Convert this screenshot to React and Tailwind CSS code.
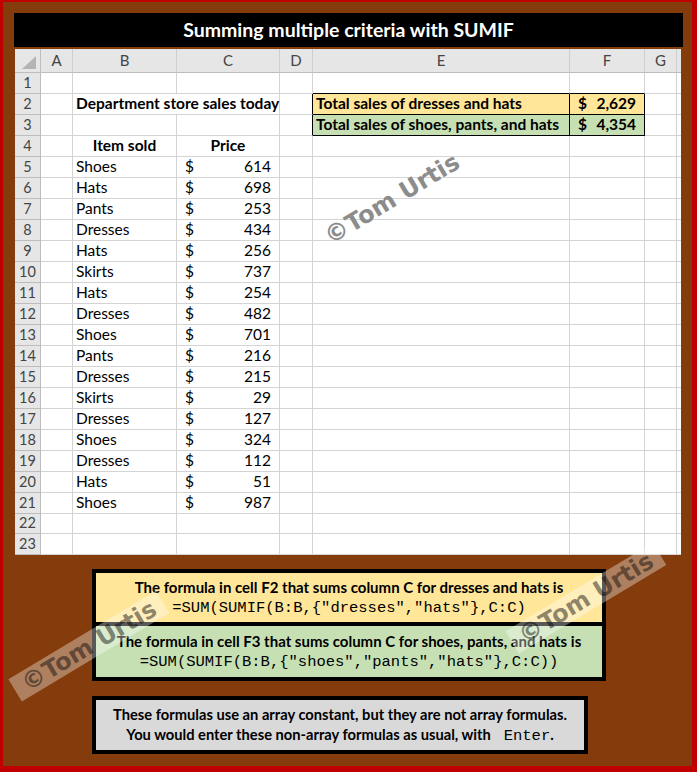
import React from 'react';

const GRID = 'grid grid-cols-[26px_32px_104px_103px_33px_257px_75px_32px_4px]';
const LETTERS = ['A', 'B', 'C', 'D', 'E', 'F', 'G', ''];

const sales = [
  ['Shoes', 614], ['Hats', 698], ['Pants', 253], ['Dresses', 434], ['Hats', 256],
  ['Skirts', 737], ['Hats', 254], ['Dresses', 482], ['Shoes', 701], ['Pants', 216],
  ['Dresses', 215], ['Skirts', 29], ['Dresses', 127], ['Shoes', 324], ['Dresses', 112],
  ['Hats', 51], ['Shoes', 987],
];

const cell = 'border-r border-b border-[#d4d4d4] flex items-center overflow-visible whitespace-nowrap';

const Money = ({ value, bold }) => (
  <div className={`flex w-full justify-between px-2 ${bold ? 'font-bold' : ''}`}>
    <span>$</span>
    <span>{value}</span>
  </div>
);

const SheetRow = ({ n }) => {
  const item = n >= 5 && n <= 21 ? sales[n - 5] : null;
  const height = n === 22 ? 'h-[20px]' : 'h-[21px]';

  // cells A..G plus the sliver past G
  let b = null, c = null, e = null, f = null;
  let bCls = cell, cCls = cell, dCls = cell, eCls = cell, fCls = cell;

  if (n === 1) {
    eCls = `${cell} !border-b-black`;
    fCls = `${cell} !border-b-black`;
  }
  if (n === 2) {
    bCls = 'border-b border-[#d4d4d4] flex items-center overflow-visible whitespace-nowrap relative z-10';
    b = <span className="pl-[3px] font-bold">Department store sales today</span>;
    dCls = `${cell} !border-r-black`;
    eCls = `${cell} !border-r-black !border-b-black bg-[#ffe699]`;
    fCls = `${cell} !border-r-black !border-b-black bg-[#ffe699]`;
    e = <span className="pl-[3px] font-bold">Total sales of dresses and hats</span>;
    f = <Money value="2,629" bold />;
  }
  if (n === 3) {
    dCls = `${cell} !border-r-black`;
    eCls = `${cell} !border-r-black !border-b-black bg-[#c6e0b4]`;
    fCls = `${cell} !border-r-black !border-b-black bg-[#c6e0b4]`;
    e = <span className="pl-[3px] font-bold">Total sales of shoes, pants, and hats</span>;
    f = <Money value="4,354" bold />;
  }
  if (n === 4) {
    bCls = `${cell} justify-center font-bold`;
    cCls = `${cell} justify-center font-bold`;
    b = 'Item sold';
    c = 'Price';
  }
  if (item) {
    b = <span className="pl-[3px]">{item[0]}</span>;
    c = <Money value={item[1]} />;
  }

  return (
    <div className={`${GRID} ${height}`}>
      <div className="bg-[#e6e6e6] border-r border-b border-[#bdbdbd] flex items-center justify-center text-[14.5px] text-[#444]">
        {n}
      </div>
      <div className={cell} />
      <div className={bCls}>{b}</div>
      <div className={cCls}>{c}</div>
      <div className={dCls} />
      <div className={eCls}>{e}</div>
      <div className={fCls}>{f}</div>
      <div className={cell} />
      <div className="border-b border-[#d4d4d4]" />
    </div>
  );
};

const Sheet = () => (
  <div className="ml-[1px] mt-[2px] w-[666px] bg-white text-[15.5px] text-black leading-none">
    <div className={`${GRID} h-[24px] bg-[#e6e6e6]`}>
      <div className="relative border-r border-b border-[#bdbdbd]">
        <svg className="absolute right-[4px] bottom-[3px]" width="14" height="13" viewBox="0 0 14 13">
          <polygon points="14,0 14,13 0,13" fill="#b4b4b4" />
        </svg>
      </div>
      {LETTERS.map((l, i) => (
        <div
          key={i}
          className={`flex items-center justify-center border-b border-[#bdbdbd] text-[15px] text-[#444] ${i < 7 ? 'border-r border-r-[#cfcfcf]' : ''}`}
        >
          {l}
        </div>
      ))}
    </div>
    {Array.from({ length: 23 }, (_, i) => (
      <SheetRow key={i} n={i + 1} />
    ))}
  </div>
);

const Watermark = ({ className, band }) => (
  <div
    className={`absolute -translate-x-1/2 -translate-y-1/2 rotate-[-31deg] whitespace-nowrap font-['DejaVu_Sans',sans-serif] font-bold text-[24px] leading-[26px] ${className} ${
      band ? 'bg-white/35 text-black/45 px-[10px]' : 'text-[#8c8c8c]'
    }`}
  >
    ©Tom Urtis
  </div>
);

export default function App() {
  return (
    <div className="relative w-[697px] h-[772px] overflow-hidden bg-[#843c0c] border-[#c00000] border-t-2 border-l-[3px] border-r-[5px] border-b-[6px] pt-[11px] pl-[11px] font-['Lato','Carlito',sans-serif]">
      <div className="w-[669px] h-[34px] bg-black flex items-center justify-center text-white font-bold text-[19.5px]">
        Summing multiple criteria with SUMIF
      </div>

      <Sheet />

      <div className="ml-[78px] mt-[14px] w-[514px] border-4 border-black text-[15px] text-black text-center">
        <div className="h-[53px] bg-[#ffe699] border-b-4 border-black flex flex-col justify-center gap-[3px]">
          <p className="font-bold leading-[18px]">The formula in cell F2 that sums column C for dresses and hats is</p>
          <p className="font-['Liberation_Mono',monospace] text-[15.5px] leading-[18px]">
            =SUM(SUMIF(B:B,{'{'}"dresses","hats"{'}'},C:C)
          </p>
        </div>
        <div className="h-[51px] bg-[#c6e0b4] flex flex-col justify-center gap-[3px]">
          <p className="font-bold leading-[18px]">The formula in cell F3 that sums column C for shoes, pants, and hats is</p>
          <p className="font-['Liberation_Mono',monospace] text-[15.5px] leading-[18px]">
            =SUM(SUMIF(B:B,{'{'}"shoes","pants","hats"{'}'},C:C))
          </p>
        </div>
      </div>

      <div className="ml-[78px] mt-[15px] w-[496px] h-[58px] border-4 border-black bg-[#d9d9d9] flex flex-col justify-center gap-[2px] text-[14.7px] text-black text-center font-bold">
        <p className="leading-[18px]">These formulas use an array constant, but they are not array formulas.</p>
        <p className="leading-[18px]">
          You would enter these non-array formulas as usual, with{' '}
          <span className="font-['Liberation_Mono',monospace] font-normal text-[15.5px]">&nbsp;Enter</span>.
        </p>
      </div>

      <Watermark className="left-[389px] top-[197px]" />
      <Watermark band className="left-[86px] top-[644px]" />
      <Watermark band className="left-[583px] top-[596px]" />
    </div>
  );
}
